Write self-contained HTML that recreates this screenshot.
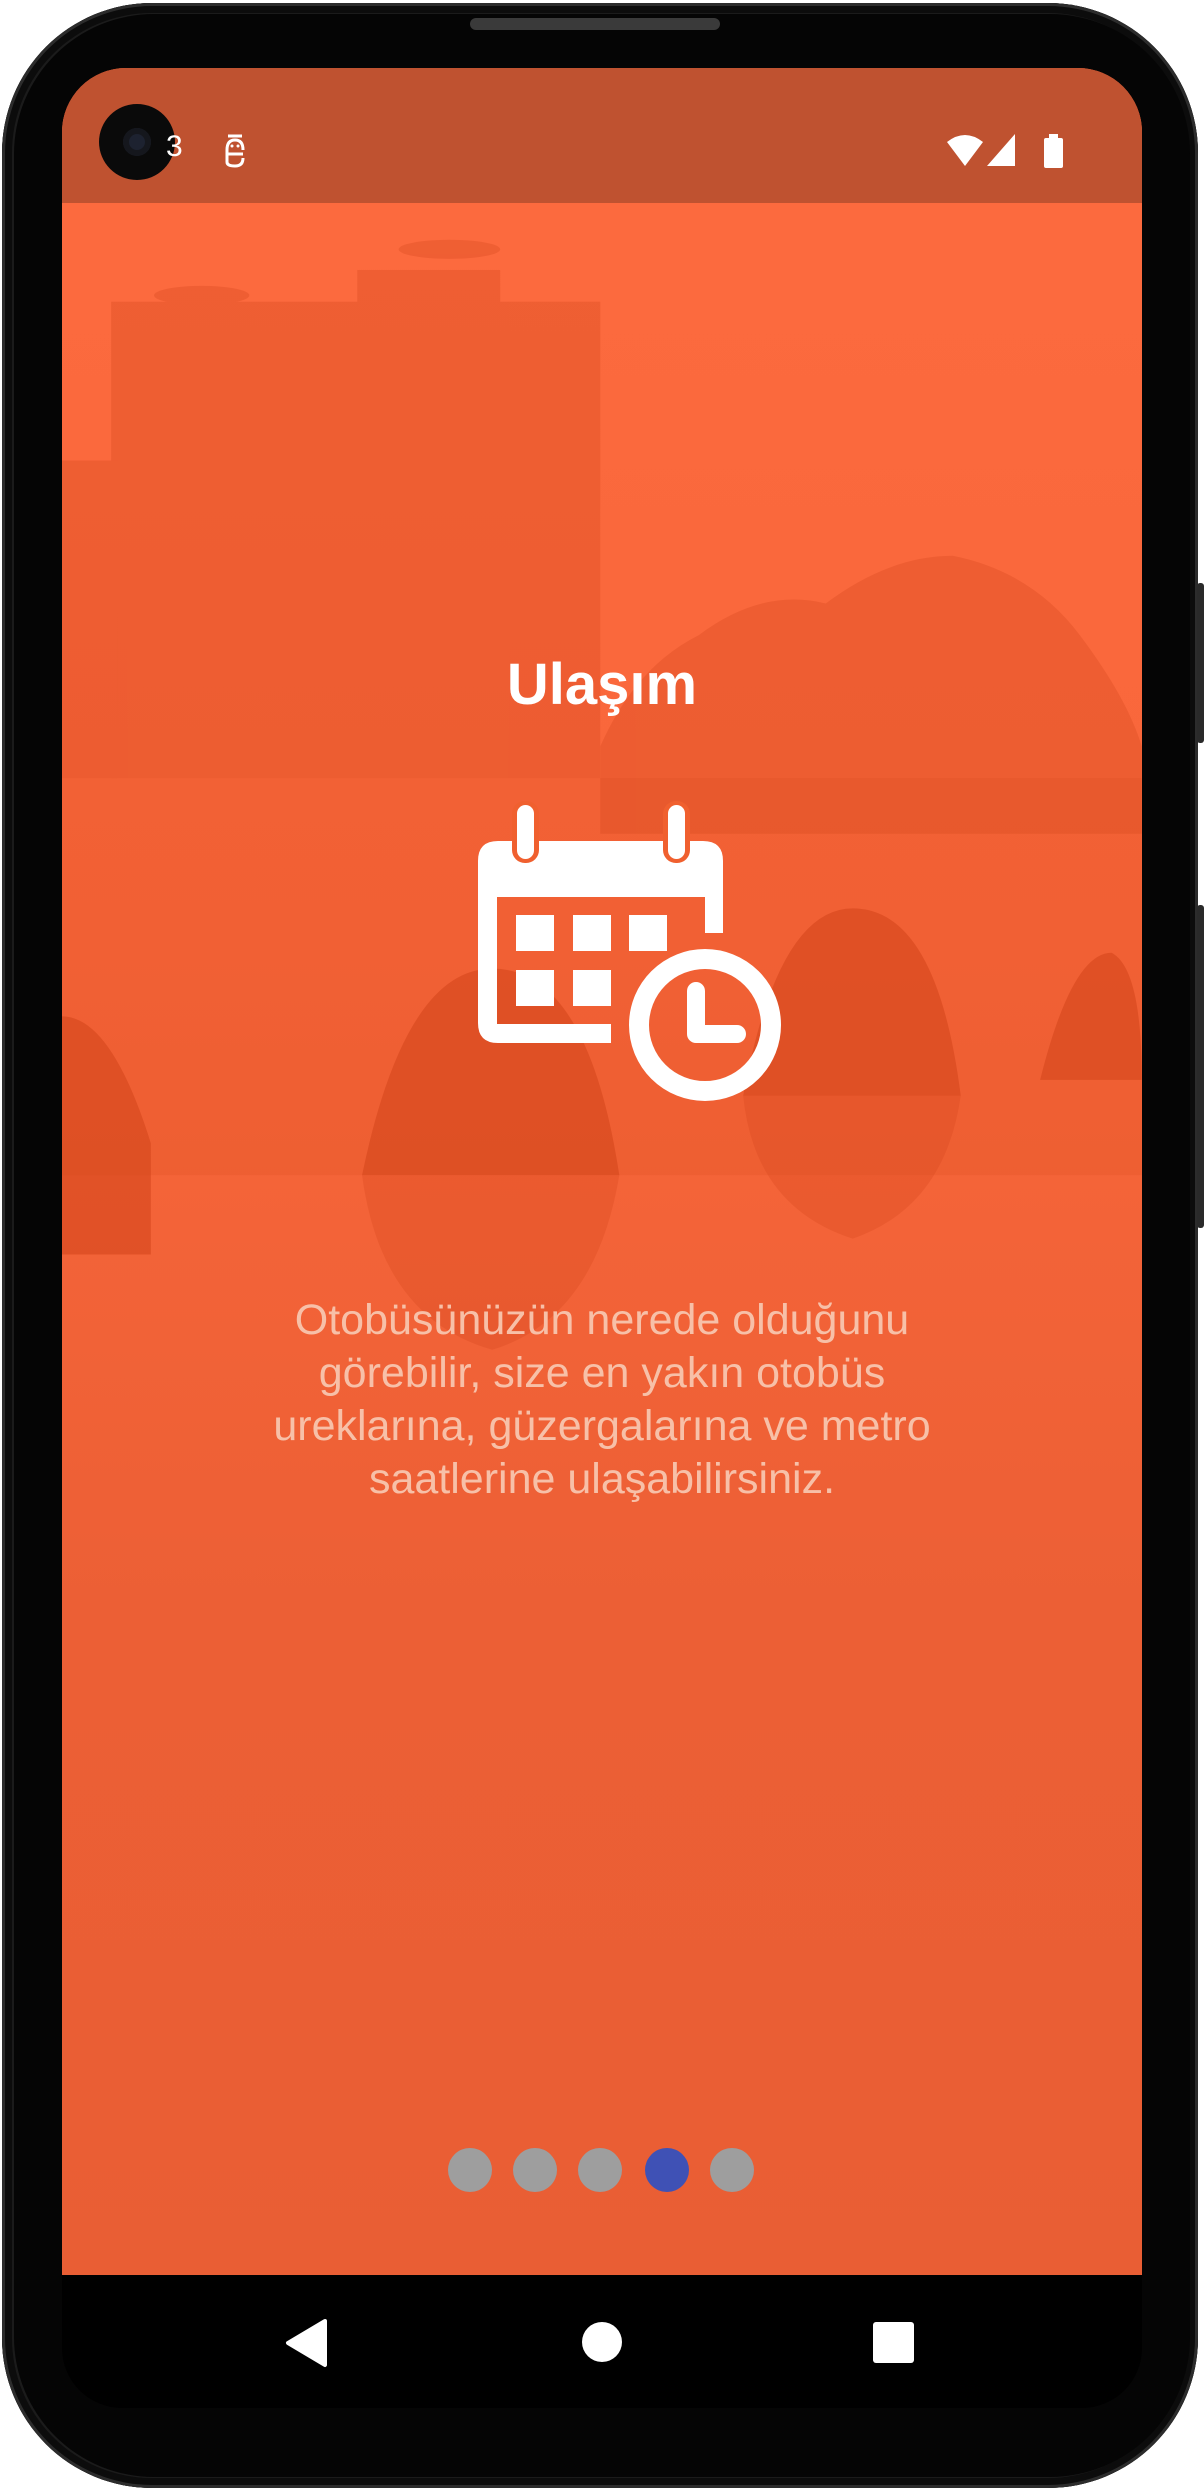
<!DOCTYPE html>
<html><head><meta charset="utf-8"><style>
html,body{margin:0;padding:0;width:1204px;height:2491px;overflow:hidden;background:#fff;}
.phone{position:absolute;left:2px;top:3px;width:1196px;height:2485px;border-radius:150px;background:#1b1b1b;box-shadow:inset 0 0 0 3px #2c2c2c,inset 0 0 0 10px #0c0c0c;}
.inner{position:absolute;left:14px;top:14px;right:14px;bottom:14px;border-radius:140px;background:#050505;}
.screen{position:absolute;left:62px;top:68px;width:1080px;height:2340px;border-radius:64px 64px 60px 60px;overflow:hidden;background:#000;}
.content{position:absolute;left:0;top:0;width:1080px;height:2207px;background:linear-gradient(#fd6b3f 0%,#f8663a 40%,#ec5f35 70%,#e95e34 100%);overflow:hidden;}
.status{position:absolute;left:0;top:0;width:1080px;height:135px;background:#bf5230;}
.title{position:absolute;left:0;width:1080px;top:583px;text-align:center;color:#fff;font:bold 58px "Liberation Sans",sans-serif;}
.desc{position:absolute;left:0;width:1080px;top:1226px;text-align:center;color:#f7c0a8;font:43px/53px "Liberation Sans",sans-serif;}
.dot{position:absolute;top:2080px;width:44px;height:44px;border-radius:50%;background:#9e9e9e;}
.btn{position:absolute;right:0;width:7px;background:#2a2a2a;border-radius:3px;}
</style></head><body>
<div class="phone"></div>
<div class="btn" style="top:583px;height:160px;"></div>
<div class="btn" style="top:905px;height:323px;"></div>
<div class="inner"></div>
<div style="position:absolute;left:470px;top:18px;width:250px;height:12px;border-radius:6px;background:#3a3a3a;"></div>
<div class="screen">
 <div class="content">
  <svg width="1080" height="2207" style="position:absolute;left:0;top:0">
   <g transform="translate(-62,-68) scale(1.588)">
    <g fill="#d84a20" opacity="0.35">
     <rect x="70" y="190" width="308" height="300"/>
     <rect x="225" y="170" width="90" height="25"/>
     <rect x="75" y="200" width="80" height="20"/>
     <ellipse cx="127" cy="186" rx="30" ry="6"/>
     <ellipse cx="283" cy="157" rx="32" ry="6"/>
     <rect x="39" y="290" width="35" height="200"/>
     <path d="M378 470 Q400 420 440 400 Q480 370 520 380 Q560 350 600 350 Q650 360 680 400 Q710 440 719 470 L719 525 L378 525Z"/>
    </g>
    <g fill="#d84a20" opacity="0.2">
     <rect x="39" y="490" width="680" height="250"/>
    </g>
    <g fill="#d2441a" opacity="0.55">
     <path d="M39 640 Q70 640 95 720 L95 790 L39 790Z"/>
     <path d="M228 740 Q255 610 310 610 Q370 610 390 740Z"/>
     <path d="M468 690 Q490 572 537 572 Q590 572 605 690Z"/>
     <path d="M655 680 Q675 600 700 600 Q719 610 719 680Z"/>
     <path d="M228 740 L390 740 Q375 830 310 850 Q240 830 228 740Z" opacity="0.5"/>
     <path d="M468 690 L605 690 Q595 760 537 780 Q475 760 468 690Z" opacity="0.5"/>
    </g>
   </g>
  </svg>
  <div class="status"></div>
  <div style="position:absolute;left:37px;top:36px;width:76px;height:76px;border-radius:50%;background:#0a0a0a;"><div style="position:absolute;left:24px;top:24px;width:28px;height:28px;border-radius:50%;background:#1d2230;box-shadow:inset 0 0 0 6px #15171d;"></div></div>
  <div style="position:absolute;left:104px;top:62px;color:#fff;font:30px 'Liberation Sans',sans-serif;">3</div>
  <svg style="position:absolute;left:160px;top:64px" width="26" height="36" viewBox="0 0 26 36"><path d="M6 4 L20 4 M5 18 Q5 8 13 8 Q21 8 21 18 M5 18 L5 30 Q5 34 13 34 Q21 34 21 26 M5 22 L21 22" stroke="#fff" stroke-width="3" fill="none"/><circle cx="10" cy="14" r="1.5" fill="#fff"/><circle cx="16" cy="14" r="1.5" fill="#fff"/></svg>
  <svg style="position:absolute;left:885px;top:64px" width="130" height="40" viewBox="0 0 130 40">
   <path d="M0 10 Q18 -4 36 10 L18 34Z" fill="#fff"/>
   <path d="M68 2 L68 34 L40 34Z" fill="#fff"/>
   <rect x="97" y="6" width="19" height="30" rx="2" fill="#fff"/><rect x="102" y="2" width="9" height="5" fill="#fff"/>
  </svg>
  <div class="title">Ulaşım</div>
  <svg style="position:absolute;left:0;top:0" width="1080" height="1100">
   <g transform="translate(-62,-57)">
    <path fill="#fff" fill-rule="evenodd" d="M498 830 H703 Q723 830 723 850 V922 H705 V886 H497 V1013 H611 V1032 H498 Q478 1032 478 1012 V850 Q478 830 498 830Z"/>
    <rect x="512" y="790" width="27" height="62" rx="13" fill="#f0602f"/>
    <rect x="663" y="790" width="27" height="62" rx="13" fill="#f0602f"/>
    <rect x="517" y="794" width="17" height="54" rx="8.5" fill="#fff"/>
    <rect x="668" y="794" width="17" height="54" rx="8.5" fill="#fff"/>
    <g fill="#fff">
     <rect x="516" y="904" width="38" height="36"/><rect x="573" y="904" width="38" height="36"/><rect x="629" y="904" width="38" height="36"/>
     <rect x="516" y="959" width="38" height="36"/><rect x="573" y="959" width="38" height="36"/>
    </g>
    <circle cx="705" cy="1014" r="66" fill="none" stroke="#fff" stroke-width="20"/>
    <path d="M696 980 V1023 H737" fill="none" stroke="#fff" stroke-width="18" stroke-linecap="round" stroke-linejoin="round"/>
   </g>
  </svg>
  <div class="desc">Otobüsünüzün nerede olduğunu<br>görebilir, size en yakın otobüs<br>ureklarına, güzergalarına ve metro<br>saatlerine ulaşabilirsiniz.</div>
  <div class="dot" style="left:386px"></div>
  <div class="dot" style="left:451px"></div>
  <div class="dot" style="left:516px"></div>
  <div class="dot" style="left:583px;background:#3f51b5"></div>
  <div class="dot" style="left:648px"></div>
 </div>
 <svg style="position:absolute;left:0;top:2207px" width="1080" height="133">
  <path d="M263 90 L263 46 L226 68Z" fill="#fff" stroke="#fff" stroke-width="4" stroke-linejoin="round"/>
  <circle cx="540" cy="67" r="20" fill="#fff"/>
  <rect x="811" y="47" width="41" height="41" rx="3" fill="#fff"/>
 </svg>
</div>
</body></html>
